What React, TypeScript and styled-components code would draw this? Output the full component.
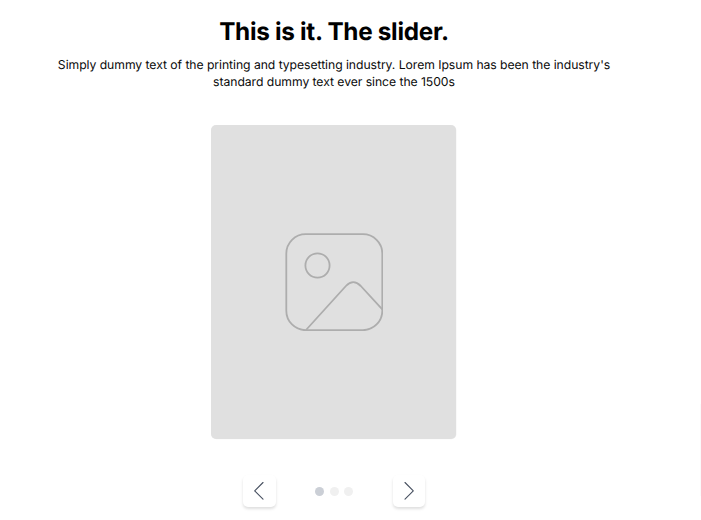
import React from "react";
import styled, { createGlobalStyle } from "styled-components";

const GlobalStyle = createGlobalStyle`
  *, *::before, *::after { box-sizing: border-box; }
  body { margin: 0; background: #fff; overflow: hidden; }
`;

const Page = styled.main`
  display: flex;
  height: 520px;
  background: #fff;
  color: #0a0a0a;
  font-family: Inter, sans-serif;
  text-rendering: geometricPrecision;
`;

const Section = styled.section`
  width: 668px;
  display: flex;
  flex-direction: column;
  align-items: center;
  padding-top: 16px;
`;

const Title = styled.h1`
  margin: 0;
  font-size: 24.3px;
  letter-spacing: -0.3px;
  line-height: 30px;
  font-weight: 700;
  color: #000;
  white-space: nowrap;
`;

const Description = styled.p`
  margin: 10px 0 0;
  font-size: 12.2px;
  letter-spacing: -0.05px;
  line-height: 17px;
  text-align: center;
  white-space: nowrap;
`;

const Slide = styled.div`
  display: flex;
  align-items: center;
  justify-content: center;
  width: 245px;
  height: 314px;
  margin: 35px 1px 0 0;
  border-radius: 5px;
  background: #e0e0e0;
  box-shadow: 0.4px 0.3px 0 rgba(0, 0, 0, 0.06);
`;

const Controls = styled.nav`
  display: flex;
  align-items: center;
  justify-content: space-between;
  width: 182px;
  margin-top: 36px;
`;

const ArrowButton = styled.button`
  display: flex;
  align-items: center;
  justify-content: center;
  width: 32.5px;
  height: 32px;
  padding: 0;
  border: 0;
  border-radius: 5px;
  background: #fff;
  box-shadow: 0 2px 3px rgba(0, 0, 0, 0.13);
`;

const Dots = styled.div`
  display: flex;
  gap: 5.4px;
`;

const Dot = styled.span<{ $active?: boolean }>`
  width: 9px;
  height: 9px;
  border-radius: 50%;
  background: ${({ $active }) => ($active ? "#cbcfd6" : "#f0f0f0")};
`;

const PageEdge = styled.span`
  width: 1px;
  height: 92px;
  margin: 404px 0 0 auto;
  background: #fbfbfb;
`;

function ImageIcon() {
  return (
    <svg width="99" height="98" viewBox="0 0 99 98" fill="none" stroke="#adadad" strokeWidth="1.8" aria-hidden="true">
      <rect x="2.3" y="1.2" width="96" height="96" rx="19.5" />
      <circle cx="33.5" cy="32.5" r="12.1" />
      <path d="M22 97 61.9 53Q69.3 45.3 76.8 53L98.3 76.4" />
    </svg>
  );
}

function Chevron({ direction }: { direction: "left" | "right" }) {
  return (
    <svg width="12" height="20" viewBox="0 0 12 20" fill="none" stroke="#475060" strokeWidth="1.1" strokeLinecap="round" strokeLinejoin="round" aria-hidden="true">
      <path d={direction === "left" ? "M10 1.5 1.7 9.9 10 18.2" : "M2 1.5 10.3 9.9 2 18.2"} />
    </svg>
  );
}

export default function App() {
  return (
    <Page>
      <GlobalStyle />
      <Section>
        <Title>This is it. The slider.</Title>
        <Description>
          Simply dummy text of the printing and typesetting industry. Lorem Ipsum has been the industry's
          <br />
          standard dummy text ever since the 1500s
        </Description>
        <Slide><ImageIcon /></Slide>
        <Controls>
          <ArrowButton aria-label="Previous slide"><Chevron direction="left" /></ArrowButton>
          <Dots><Dot $active /><Dot /><Dot /></Dots>
          <ArrowButton aria-label="Next slide"><Chevron direction="right" /></ArrowButton>
        </Controls>
      </Section>
      <PageEdge />
    </Page>
  );
}
